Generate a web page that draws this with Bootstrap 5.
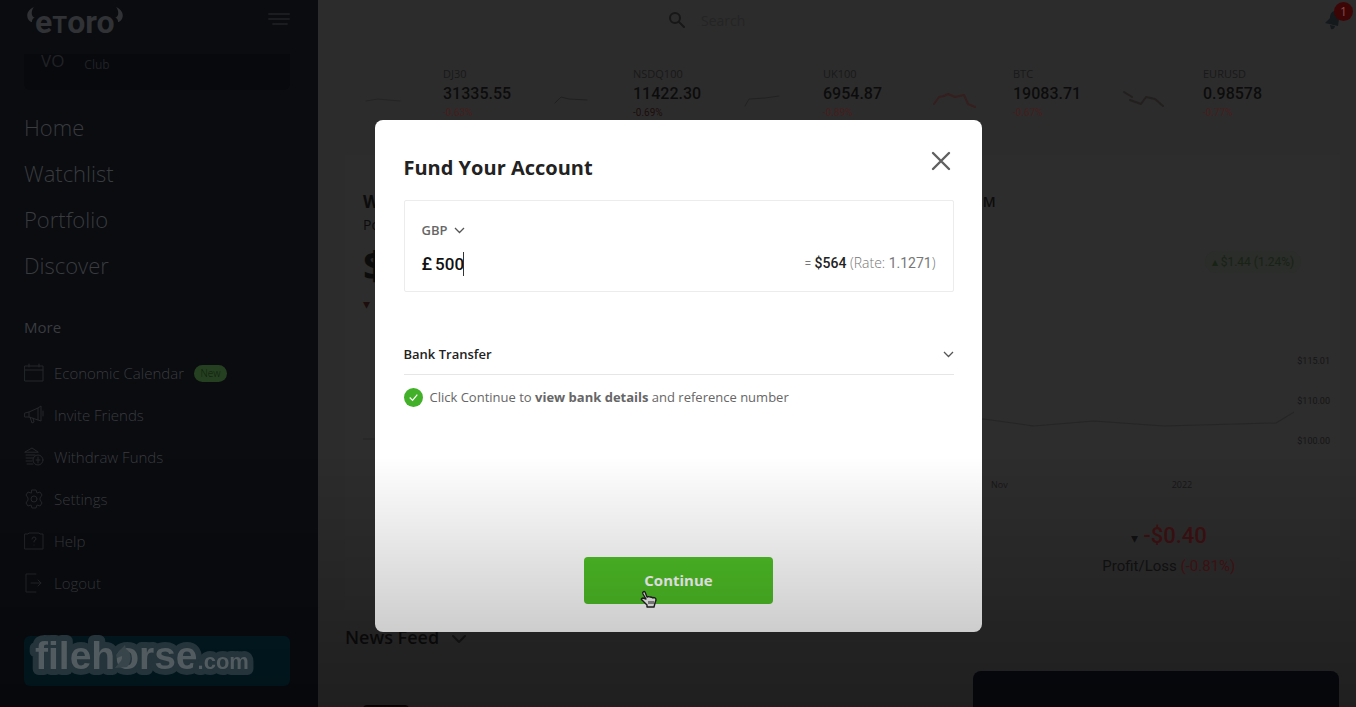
<!DOCTYPE html>
<html lang="en">
<head>
<meta charset="utf-8">
<meta name="viewport" content="width=device-width, initial-scale=1">
<title>eToro - Fund Your Account</title>
<link href="https://cdn.jsdelivr.net/npm/bootstrap@5.3.0/dist/css/bootstrap.min.css" rel="stylesheet">
<style>
  body { font-family: "Open Sans", "Noto Sans", sans-serif; background: #2c2c2c; color: #0c0c0c; }
  a { text-decoration: none; color: inherit; }
  .num { font-family: Roboto, "Liberation Sans", sans-serif; }
  .sidebar { width: 318px; background: #0a0c10; color: #33353a; padding: 0 28px 0 24px; }
  .brand-row { height: 54px; padding: 7px 0 0 3px; }
  .brand-name { font: 700 32px/30px Roboto, "Liberation Sans", sans-serif; color: #303235; }
  .brand-name small { font-size: 24px; }
  .club-strip { height: 36px; background: #08090d; color: #202226; border-radius: 0 0 6px 6px; padding-left: 17px; }
  .club-strip .vo { font-size: 17px; line-height: 14px; }
  .club-strip .club { font-size: 12px; line-height: 22px; }
  .main-nav { margin-top: 14px; }
  .main-nav a { font-size: 22px; line-height: 46px; font-weight: 300; color: #393b3f; }
  .more-title { font-size: 15px; line-height: 24px; margin: 27px 0 13px; color: #393b3f; }
  .more-nav a { height: 42px; gap: 10px; font-size: 15px; font-weight: 300; color: #393b3f; }
  .icon { fill: none; stroke: currentColor; stroke-linecap: round; stroke-linejoin: round; flex: none; }
  .more-nav .icon { color: #25272b; }
  .new-tag { background: #254020; color: #0d1c0d; font-size: 10px; line-height: 17px; border-radius: 9px; width: 33px; }
  .deposit { height: 50px; margin-top: 32px; background: #021c25; border-radius: 6px; }
  .watermark { left: 1px; top: -5px; z-index: 2000; pointer-events: none; }
  .topbar { height: 40px; }
  .search-box { margin-left: 351px; gap: 16px; }
  .search-box input { width: 270px; font-size: 14px; color: #222; background: transparent; outline: 0; }
  .search-box input::placeholder { color: #242424; opacity: 1; }
  .notif { margin-right: 12px; color: #14191c; }
  .notif-count { left: 10px; top: -8px; width: 19px; height: 19px; font-size: 12px; line-height: 19px; background: #3d0606; color: #8a4a48; border-radius: 50%; }
  .tickers { padding: 26px 43px 0 45px; height: 115px; }
  .tickers a { gap: 36px; flex: 1 1 0; }
  .tick-name { font-size: 11px; line-height: 16px; color: #191919; }
  .tick-val { font-size: 16px; line-height: 23px; font-weight: 500; }
  .tick-chg { font-size: 10px; line-height: 16px; color: #471d1d; }
  .panel { margin: 0 16px 0 27px; padding: 36px 10px 0 18px; height: 455px; background: #2d2d2d; }
  .w-title { font-size: 17px; line-height: 22px; font-weight: 700; }
  .w-title .period { font-size: 14px; font-weight: 600; }
  .w-sub { font-size: 14px; line-height: 24px; }
  .w-sum { font-size: 40px; line-height: 56px; font-weight: 700; }
  .gain { width: 96px; height: 22px; margin: 60px 29px 0 auto; background: #2a2d29; color: #182215; font-size: 12px; line-height: 22px; border-radius: 11px; }
  .axis { width: 36px; font-size: 9px; line-height: 40px; color: #151515; }
  .chart-row { margin-top: 27px; }
  .months { font-size: 9px; line-height: 14px; color: #171717; margin-top: 17px; }
  .month-b { padding-left: 164px; }
  .pl-block { margin-top: 28px; }
  .pl-sum { font-size: 22px; line-height: 32px; font-weight: 500; color: #3e1113; }
  .pl-cap { font-size: 15px; line-height: 24px; color: #131313; }
  .tri { font-size: 14px; color: #111; }
  .fall { color: #451315; }
  .fall-dim { color: #1d0d0d; }
  .news-title { font-size: 18px; line-height: 26px; font-weight: 600; margin: 14px 0 0 27px; }
  .promo { width: 366px; height: 40px; margin: 21px 17px 0 auto; background: #090a10; border-radius: 8px 8px 0 0; }
  .post { width: 46px; margin-left: 45px; height: 6px; background: #050505; border-radius: 4px 4px 0 0; }
  .shade { height: 250px; z-index: 1500; pointer-events: none; background: linear-gradient(rgba(0,0,0,0), rgba(0,0,0,.28)); }
  .fund-dialog { max-width: 607px; margin: 120px auto 0; }
  .fund-dialog .modal-content { border: 0; border-radius: 8px; padding: 29px 28px 28px 29px; color: #222; background: #fff; }
  .fund-title { font-size: 20px; line-height: 38px; font-weight: 700; }
  .x-btn { color: #606060; line-height: 1; margin-right: 3px; height: 24px; }
  .amount-box { border: 1px solid #ececec; margin-top: 13px; padding: 18px 17px 0; height: 92px; border-radius: 2px; }
  .pick { appearance: none; border: 0; outline: 0; background-color: transparent; background-repeat: no-repeat; background-position: right center; background-size: 11px 7px;
    background-image: url("data:image/svg+xml,%3Csvg xmlns='http://www.w3.org/2000/svg' viewBox='0 0 11 7'%3E%3Cpath d='M1 1l4.5 4.5L10 1' fill='none' stroke='%23555' stroke-width='1.3'/%3E%3C/svg%3E"); }
  .pick-cur { width: 43px; font-size: 13px; line-height: 22px; font-weight: 600; color: #666; padding: 0; }
  .amount { font-size: 18px; line-height: 24px; font-weight: 500; color: #111; gap: 3px; }
  .amount input { width: 29px; padding: 0; border: 0; outline: 0; font: inherit; font-size: 17px; color: inherit; }
  .caret-bar { width: 1px; height: 24px; background: #333; margin-left: -4px; }
  .rate { font-size: 14px; line-height: 28px; color: #777; }
  .rate b { font-weight: 500; color: #222; }
  .rate span { font-family: "Open Sans", sans-serif; font-weight: 300; }
  .pick-pay { margin-top: 43px; height: 40px; border-bottom: 1px solid #e6e6e6; font-size: 13px; font-weight: 600; color: #222; }
  .hint { margin-top: 12px; gap: 7px; font-size: 13px; line-height: 20px; color: #666; }
  .go-btn { width: 189px; height: 47px; margin-top: 150px; background: #4fc027; border: 0; color: #fff; font-size: 15px; font-weight: 700; border-radius: 4px; }
  .hand { left: 56px; top: 33px; }
</style>
</head>
<body class="vh-100 overflow-hidden">
<div class="d-flex h-100">
  <aside class="sidebar flex-shrink-0">
    <div class="brand-row d-flex justify-content-between">
      <a href="#" class="d-flex" aria-label="eToro home">
        <svg width="8" height="17" viewBox="0 0 8 18" fill="#303235"><path d="M7 0C3 2 0 5 0 9c0 4 3 7 5 7 0-3 1-4 3-5-3 0-5-5-1-11z"/></svg>
        <span class="brand-name">e<small>T</small>oro</span>
        <svg width="8" height="17" viewBox="0 0 8 18" fill="#303235"><path d="M1 0c4 2 7 5 7 9 0 4-3 7-5 7 0-3-1-4-3-5 3 0 5-5 1-11z"/></svg>
      </a>
      <svg class="icon mt-1" width="22" height="16" viewBox="0 0 22 16" color="#1a1c1f" stroke-width="2"><path d="M1 3h20M1 8h20M5 13h14"/></svg>
    </div>
    <div class="club-strip d-flex gap-3"><span class="vo">VO</span><span class="club ps-1">Club</span></div>
    <nav class="main-nav d-flex flex-column">
      <a href="#">Home</a><a href="#">Watchlist</a><a href="#">Portfolio</a><a href="#">Discover</a>
    </nav>
    <h2 class="more-title">More</h2>
    <nav class="more-nav d-flex flex-column">
      <a href="#" class="d-flex align-items-center"><svg class="icon" width="20" height="20" viewBox="0 0 20 20"><path d="M1 3h18v15H1zM1 7h18M5 1v3M15 1v3"/></svg>Economic Calendar<span class="new-tag text-center">New</span></a>
      <a href="#" class="d-flex align-items-center"><svg class="icon" width="20" height="20" viewBox="0 0 20 20"><path d="M1 8l4-1 9-4v12l-9-3H1zM5 7v5M6 12l2 6 2-1-1-4M14 3l3-2v15l-3-1M19 6v5"/></svg>Invite Friends</a>
      <a href="#" class="d-flex align-items-center"><svg class="icon" width="20" height="20" viewBox="0 0 20 20"><path d="M1 5l7-4 6 4zM2 8h9M2 11h7M2 14h6M3 17h6"/><circle cx="14" cy="13" r="5"/><path d="M14 10v6M12 13h4"/></svg>Withdraw Funds</a>
      <a href="#" class="d-flex align-items-center"><svg class="icon" width="20" height="20" viewBox="0 0 20 20"><path d="M8 1h4l1 3 3-1 2 3-2 3v2l2 3-2 3-3-1-1 3H8l-1-3-3 1-2-3 2-3V9L2 6l2-3 3 1z"/><circle cx="10" cy="10" r="3"/></svg>Settings</a>
      <a href="#" class="d-flex align-items-center"><svg class="icon" width="20" height="20" viewBox="0 0 20 20"><path d="M1 3h3l1-1h10l1 1h3v15H1zM8 8q0-2 2-2t2 2q0 1-2 2v1M10 14v0"/></svg>Help</a>
      <a href="#" class="d-flex align-items-center"><svg class="icon" width="20" height="20" viewBox="0 0 20 20"><path d="M12 1H2v18h10M7 10h10M14 7l3 3-3 3"/></svg>Logout</a>
    </nav>
    <div class="deposit position-relative">
      <svg class="watermark position-absolute" width="234" height="50" viewBox="0 0 234 50" font-family="Liberation Sans, sans-serif" font-weight="700" fill="#515b60" stroke="#25343a" stroke-width="12" stroke-linejoin="round" paint-order="stroke">
        <text x="10" y="38" font-size="39">filehorse<tspan font-size="22">.com</tspan></text>
        <path d="M90 37c3-5 8-7 7-12l-5 2-1-3 6-7 3-3 1 4c6 3 6 13 1 18z" fill="#38464c" stroke="none"/>
      </svg>
    </div>
  </aside>

  <main class="flex-grow-1">
    <div class="topbar d-flex align-items-center justify-content-between">
      <label class="search-box d-flex align-items-center">
        <svg class="icon" width="16" height="16" viewBox="0 0 16 16" stroke-width="2" color="#171717"><circle cx="6" cy="6" r="5"/><path d="M10 10l5 5"/></svg>
        <input class="border-0 p-0" type="text" placeholder="Search" aria-label="Search">
      </label>
      <a href="#" class="notif position-relative" aria-label="Notifications">
        <svg class="d-block" width="20" height="20" viewBox="0 0 20 20" fill="currentColor"><path d="M11 1c4 1 6 4 4 8l-1 7-13-3 5-5c0-4 2-7 5-7zM6 15l5 1q-1 4-4 3z"/></svg>
        <span class="notif-count position-absolute text-center">1</span>
      </a>
    </div>
    <div class="tickers d-flex align-items-start">
      <a href="#" class="d-flex"><svg class="icon mt-4" width="44" height="24" viewBox="0 0 44 24" color="#242424"><path d="M3 11l12-2 10 1 12 1"/></svg><span class="d-flex flex-column"><span class="tick-name">DJ30</span><span class="tick-val num">31335.55</span><span class="tick-chg num">-0.63%</span></span></a>
      <a href="#" class="d-flex"><svg class="icon mt-4" width="44" height="24" viewBox="0 0 44 24" color="#202020"><path d="M2 13l6-6 8 2 18 1"/></svg><span class="d-flex flex-column"><span class="tick-name">NSDQ100</span><span class="tick-val num">11422.30</span><span class="tick-chg num fall-dim">-0.69%</span></span></a>
      <a href="#" class="d-flex"><svg class="icon mt-4" width="44" height="24" viewBox="0 0 44 24" color="#222"><path d="M2 16l4-7 16-1 14-2"/></svg><span class="d-flex flex-column"><span class="tick-name">UK100</span><span class="tick-val num">6954.87</span><span class="tick-chg num">-0.89%</span></span></a>
      <a href="#" class="d-flex"><svg class="icon mt-4" width="44" height="24" viewBox="0 0 44 24" color="#351e1e" stroke-width="2"><path d="M1 14l5-7 5-1 4-2 7 3 9-2 4 9 7 3"/></svg><span class="d-flex flex-column"><span class="tick-name">BTC</span><span class="tick-val num">19083.71</span><span class="tick-chg num">-0.67%</span></span></a>
      <a href="#" class="d-flex"><svg class="icon mt-4" width="44" height="24" viewBox="0 0 44 24" color="#231f1f" stroke-width="2"><path d="M1 2l8 5M7 10l11 4 5-7 9 2 8 7"/></svg><span class="d-flex flex-column"><span class="tick-name">EURUSD</span><span class="tick-val num">0.98578</span><span class="tick-chg num">-0.77%</span></span></a>
    </div>

    <section class="panel">
      <div class="row g-0">
        <div class="col-8">
          <div class="w-title d-flex justify-content-between align-items-center"><span>W</span><span class="period pe-2 me-1">M</span></div>
          <div class="w-sub">Po</div>
          <div class="w-sum">$</div>
          <div class="small fall-dim">▾</div>
        </div>
        <div class="col-4"><div class="gain num text-center">▴ $1.44 (1.24%)</div></div>
      </div>
      <div class="chart-row d-flex">
        <svg class="icon flex-grow-1 mw-100" height="120" viewBox="0 0 930 120" preserveAspectRatio="none" color="#252525"><path d="M0 98h12q300-20 608-20l50 7 60-5 70 5 112-3 20-12"/></svg>
        <div class="axis num text-end"><div>$115.01</div><div>$110.00</div><div>$100.00</div></div>
      </div>
      <div class="row g-0 months"><div class="col-8 text-end">Nov</div><div class="col-4"><div class="month-b">2022</div></div></div>
      <div class="row g-0 pl-block"><div class="col-8"></div>
        <div class="col-4 text-center num">
          <div class="pl-sum"><span class="tri">▾</span> -$0.40</div>
          <div class="pl-cap">Profit/Loss <span class="fall">(-0.81%)</span></div>
        </div>
      </div>
    </section>
    <h2 class="news-title">News Feed <svg class="icon ms-2" width="14" height="9" viewBox="0 0 14 9" stroke-width="2" color="#161616"><path d="M1 1l6 6 6-6"/></svg></h2>
    <div class="d-flex align-items-center"><div class="post align-self-end"></div><div class="promo"></div></div>
  </main>
</div>

<div class="modal d-block overflow-hidden" tabindex="-1" role="dialog" aria-labelledby="fundTitle">
  <div class="modal-dialog fund-dialog">
    <form class="modal-content">
      <div class="d-flex justify-content-between">
        <h1 class="fund-title mb-0" id="fundTitle">Fund Your Account</h1>
        <button type="button" class="btn x-btn p-0 border-0" aria-label="Close"><svg class="icon" width="20" height="20" viewBox="0 0 20 20" stroke-width="2.4"><path d="M2 2l16 16M18 2L2 18"/></svg></button>
      </div>
      <div class="amount-box">
        <select class="pick pick-cur d-block" aria-label="Currency"><option>GBP</option></select>
        <div class="d-flex justify-content-between mt-2">
          <label class="amount num d-flex align-items-center">£<input type="text" value="500" aria-label="Amount"><span class="caret-bar"></span></label>
          <div class="rate num"><small>=</small> <b>$564</b> <span>(Rate:</span> 1.1271<span>)</span></div>
        </div>
      </div>
      <select class="pick pick-pay w-100 p-0" aria-label="Payment method"><option>Bank Transfer</option></select>
      <div class="hint d-flex align-items-center">
        <svg width="19" height="19" viewBox="0 0 20 20"><circle cx="10" cy="10" r="10" fill="#43b02a"/><path d="M6 10l3 3 5-6" fill="none" stroke="#fff" stroke-width="1.3"/></svg>
        <span>Click Continue to <strong>view bank details</strong> and reference number</span>
      </div>
      <button type="button" class="btn go-btn position-relative mx-auto d-block">Continue
        <svg class="hand position-absolute" width="18" height="18" viewBox="0 0 18 18" fill="#f5f5f5" stroke="#222" stroke-width="1.4" stroke-linejoin="round"><path d="M5 2c-1-1-3 0-2 2l3 5-3-1c-2 0-2 2-1 2l5 5v2h7l1-4 1-3c0-2-2-3-3-2-1-1-2-1-3-1-1-1-2 0-3 0z"/><path d="M9 11v3M11 11v3M13 11v3" stroke-width="1"/></svg>
      </button>
    </form>
  </div>
</div>
<div class="shade fixed-bottom"></div>
<script src="https://cdn.jsdelivr.net/npm/bootstrap@5.3.0/dist/js/bootstrap.bundle.min.js"></script>
</body>
</html>
